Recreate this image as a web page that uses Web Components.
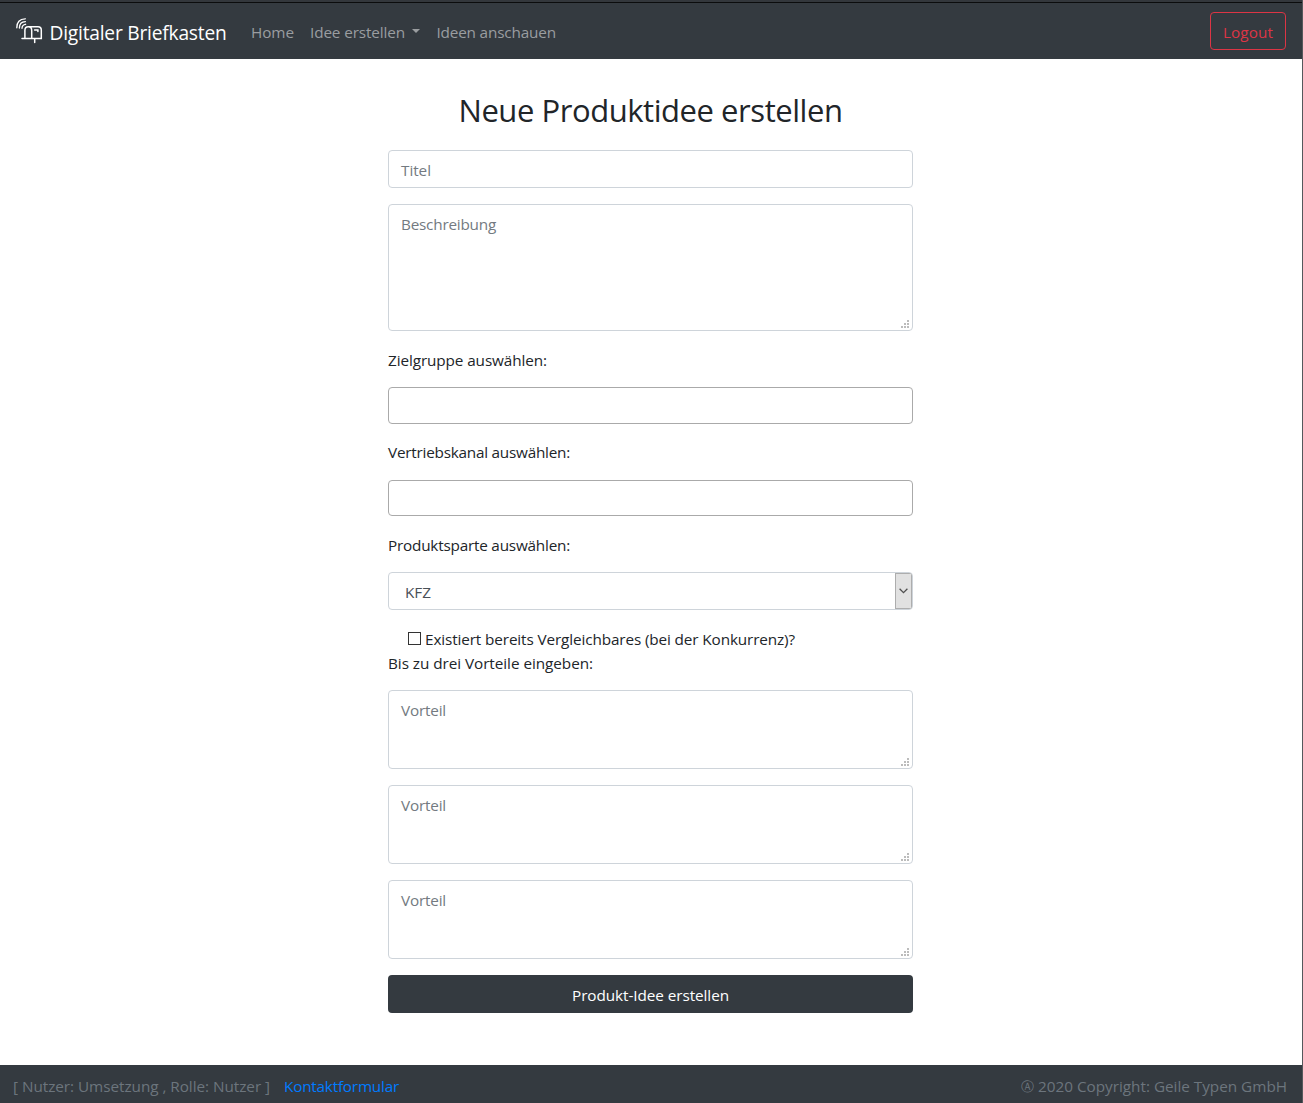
<!DOCTYPE html>
<html lang="de">
<head>
<meta charset="utf-8">
<title>Digitaler Briefkasten</title>
<style>
html,body{margin:0;height:100%}
body{background:#fff;overflow:hidden;font-family:"Open Sans","Noto Sans",sans-serif;color:#212529}
</style>
</head>
<body>
<idea-page></idea-page>
<script>
function define(name, html, ready){
  const t=document.createElement('template');
  t.innerHTML=html;
  customElements.define(name, class extends HTMLElement{
    constructor(){super();this.attachShadow({mode:'open'}).append(t.content.cloneNode(true));}
    connectedCallback(){ if(ready) ready(this,this.shadowRoot); }
  });
}

// Single line of text whose tracking is set so that it spans its "w" attribute.
define('fit-text', `<style>
:host{display:inline-block;box-sizing:border-box;height:24px;padding-top:1px;line-height:24px;font-size:15.3px;white-space:pre;flex:none}
:host([size=brand]){font-size:19.2px;height:30px;line-height:30px}
:host([size=title]){font-size:31px;height:38px;line-height:38px;padding-top:0}
:host([size=mark]){font-size:13px}
</style><span><slot></slot></span>`, (el,root)=>{
  const w=parseFloat(el.getAttribute('w'));
  const span=root.querySelector('span');
  const n=el.textContent.length;
  span.style.letterSpacing=((w-span.getBoundingClientRect().width)/n)+'px';
  el.style.width=w+'px';
});

define('mailbox-logo', `<style>:host{display:block;width:27px;height:27px;flex:none}svg{display:block}</style>
<svg width="27" height="27" viewBox="0 0 27 27" fill="none" stroke="#fff" stroke-linecap="round">
<path stroke-width="1.5" d="M6 20.5H25.3V12.2Q25.3 8.8 22 8.8H12.2Q8.9 8.8 8.9 12.4V20.5M12.3 8.8Q15.7 8.8 15.7 12.4V20.5M18.6 12.1H21.9V13.6M18.7 20.7V24.6"/>
<path stroke-width="1.35" d="M.8 9.7Q.8 1 9.2.8M3.4 10.1Q3.4 3.7 9.4 3.6M6 10.3Q6.1 6.7 9.6 6.3"/>
</svg>`);

define('nav-bar', `<style>
:host{display:flex;align-items:center;box-sizing:border-box;height:59px;border-top:2px solid #33373c;background:#343a40;padding:0 16px;color:#9a9da0}
:host{box-shadow:inset 0 1px #0b0c0d}
.brand{display:flex;align-items:center;gap:6.5px;color:#fff;margin-right:16.5px}
mailbox-logo{margin-top:1px}
.brand fit-text{margin-top:2px}
.link{display:flex;align-items:center;padding:0 8px;margin-top:1px}
.caret{width:0;border:4.8px solid transparent;border-top-color:currentColor;border-bottom:0;margin:-1px 0 0 7.4px}
.logout{margin-left:auto;box-sizing:border-box;width:76px;height:38px;border:1px solid #dc3545;border-radius:4px;color:#dc3545;padding:6px 0 0 12px;margin-top:1px}
.logout fit-text{display:block}
</style>
<div class="brand"><mailbox-logo></mailbox-logo><fit-text size="brand" w="177">Digitaler Briefkasten</fit-text></div>
<div class="link"><fit-text w="43">Home</fit-text></div>
<div class="link"><fit-text w="95">Idee erstellen</fit-text><span class="caret"></span></div>
<div class="link"><fit-text w="119.5">Ideen anschauen</fit-text></div>
<div class="logout"><fit-text w="50">Logout</fit-text></div>`);

define('text-field', `<style>
:host{display:flex;position:relative;box-sizing:border-box;height:38px;border:1px solid #ced4da;border-radius:4px;padding:6px 12px;color:#737a81}
:host([kind=tags]){border-color:#aaa}
svg{display:none;position:absolute;right:3px;bottom:2px}
:host([grip]) svg{display:block}
</style><slot></slot>
<svg width="8" height="8" fill="#bcbcbc" shape-rendering="crispEdges"><path d="M6 0h2v2h-2zM3 3h2v2h-2zM6 3h2v2h-2zM0 6h2v2h-2zM3 6h2v2h-2zM6 6h2v2h-2z"/></svg>`);

define('select-field', `<style>
:host{display:flex;justify-content:space-between;box-sizing:border-box;height:38px;border:1px solid #ced4da;border-radius:4px;color:#495057;overflow:hidden}
fit-text{margin:6px 0 0 16px}
.btn{box-sizing:border-box;width:17px;border:1px solid #adadad;background:#e1e1e1;display:flex;align-items:center;justify-content:center}
</style><fit-text w="26"><slot></slot></fit-text>
<div class="btn"><svg width="9" height="6" viewBox="0 0 9 6" fill="none" stroke="#505050" stroke-width="1.3"><path d="M.6.8 4.5 4.6 8.4.8"/></svg></div>`,
(el,root)=>{ const f=root.querySelector('fit-text'); f.textContent=el.textContent;
  const s=f.shadowRoot.querySelector('span'); s.style.letterSpacing='0'; s.style.letterSpacing=((26-s.getBoundingClientRect().width)/3)+'px'; });

define('check-row', `<style>
:host{display:flex;align-items:center;gap:4px;height:24px;padding-left:20px}
i{box-sizing:border-box;width:13px;height:13px;border:1px solid #333;background:#fff}
</style><i></i><slot></slot>`);

define('submit-button', `<style>
:host{display:flex;justify-content:center;align-items:center;height:38px;border-radius:4px;background:#343a40;color:#fff}
</style><slot></slot>`);

define('idea-form', `<style>
:host{display:flex;flex-direction:column;width:525px;margin:32px 0 0 388px}
.title{align-self:center;margin-bottom:21px}
.mb{margin-bottom:16px}
.label{display:flex;height:24px;margin-bottom:14px}
</style>
<fit-text class="title" size="title" w="384">Neue Produktidee erstellen</fit-text>
<text-field class="mb"><fit-text w="30">Titel</fit-text></text-field>
<text-field grip style="height:127px;margin-bottom:16px"><fit-text w="95">Beschreibung</fit-text></text-field>
<div class="label" style="margin-bottom:16px"><fit-text w="159">Zielgruppe auswählen:</fit-text></div>
<text-field kind="tags" style="height:37px;margin-bottom:15px"></text-field>
<div class="label" style="margin-bottom:17px"><fit-text w="182">Vertriebskanal auswählen:</fit-text></div>
<text-field kind="tags" style="height:36px;margin-bottom:16px"></text-field>
<div class="label" style="margin-bottom:16px"><fit-text w="182">Produktsparte auswählen:</fit-text></div>
<select-field style="margin-bottom:16px">KFZ</select-field>
<check-row><fit-text w="370">Existiert bereits Vergleichbares (bei der Konkurrenz)?</fit-text></check-row>
<div class="label" style="margin-bottom:16px"><fit-text w="205">Bis zu drei Vorteile eingeben:</fit-text></div>
<text-field class="mb" grip style="height:79px"><fit-text w="45">Vorteil</fit-text></text-field>
<text-field class="mb" grip style="height:79px"><fit-text w="45">Vorteil</fit-text></text-field>
<text-field class="mb" grip style="height:79px"><fit-text w="45">Vorteil</fit-text></text-field>
<submit-button><fit-text w="157">Produkt-Idee erstellen</fit-text></submit-button>`);

define('page-footer', `<style>
:host{display:flex;align-items:center;box-sizing:border-box;height:38px;margin-top:auto;padding:2px 15px 0 13px;background:#343a40;color:#6c757d}
.contact{color:#007bff;margin-left:14px}
.mark{margin-left:auto;margin-right:5px}
</style>
<fit-text w="257">[ Nutzer: Umsetzung , Rolle: Nutzer ]</fit-text>
<fit-text class="contact" w="115">Kontaktformular</fit-text>
<fit-text class="mark" size="mark" w="12">Ⓐ</fit-text>
<fit-text w="249">2020 Copyright: Geile Typen GmbH</fit-text>`);

define('idea-page', `<style>
:host{display:flex;flex-direction:column;box-sizing:border-box;width:1303px;height:1103px;border-right:1px solid #55585c}
</style>
<nav-bar></nav-bar><idea-form></idea-form><page-footer></page-footer>`);
</script>
</body>
</html>
